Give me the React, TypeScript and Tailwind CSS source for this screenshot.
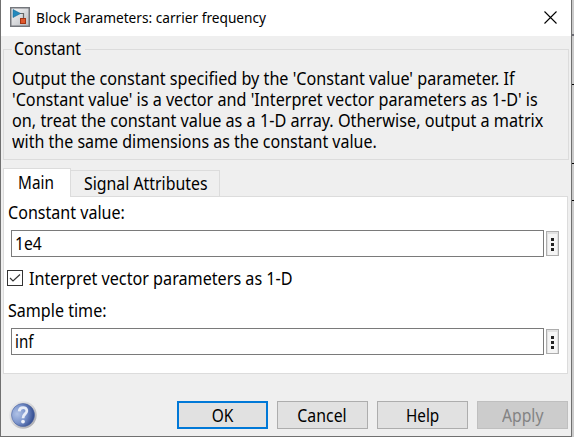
import React from "react";

const body = "font-['Noto_Sans',sans-serif] text-[18px] leading-[22px] whitespace-nowrap";

function Label({ children, className = "origin-left" }: { children: React.ReactNode; className?: string }) {
  return <span className={`block ${body} ${className}`}>{children}</span>;
}

function BlockIcon() {
  return (
    <svg width="20" height="20" viewBox="0 0 20 20" className="shrink-0">
      <defs>
        <linearGradient id="face" x1="0" y1="0" x2="1" y2="1">
          <stop offset="0" stopColor="#fafafa" />
          <stop offset="1" stopColor="#b8bbc0" />
        </linearGradient>
      </defs>
      <rect x="0.75" y="0.75" width="18.5" height="18.5" fill="url(#face)" stroke="#74777c" strokeWidth="1.5" />
      <path d="M10 6.5H13.5V11" fill="none" stroke="#666" strokeWidth="1.2" />
      <path d="M3 2.5L10.5 6.5L3 10.5Z" fill="#2389bd" stroke="#176993" strokeWidth="0.6" />
      <rect x="10.5" y="11.5" width="5" height="5" fill="#e0582c" stroke="#a33413" />
    </svg>
  );
}

function HelpIcon() {
  return (
    <svg width="28" height="28" viewBox="0 0 28 28" className="shrink-0">
      <defs>
        <linearGradient id="rim" x1="0" y1="0" x2="1" y2="1">
          <stop offset="0" stopColor="#f0f0f0" />
          <stop offset="0.5" stopColor="#d3d3d5" />
          <stop offset="1" stopColor="#a0a0a6" />
        </linearGradient>
        <radialGradient id="ball" cx="0.25" cy="0.45" r="0.8">
          <stop offset="0" stopColor="#b0c2e6" />
          <stop offset="0.5" stopColor="#7a93cb" />
          <stop offset="1" stopColor="#263f85" />
        </radialGradient>
      </defs>
      <circle cx="14" cy="14" r="13.7" fill="url(#rim)" />
      <circle cx="14" cy="14" r="11.5" fill="url(#ball)" stroke="#4d64a0" strokeWidth="0.6" />
      <path d="M10.2 10.4C10.4 5.4 18 5.4 17.8 10C17.6 13 14 13 14 17.2" fill="none" stroke="#e8edf8" strokeWidth="2.8" />
      <circle cx="14" cy="20.6" r="1.9" fill="#f0f3fb" />
    </svg>
  );
}

function Field({ value, scale }: { value: string; scale: string }) {
  return (
    <div className="flex h-[27px] shrink-0 items-center gap-0.5">
      <div className="flex h-[27px] w-[533px] items-center border border-[#7a7a7a] bg-white pl-[3px]">
        <Label className={`-mt-px origin-left ${scale}`}>{value}</Label>
      </div>
      <div className="flex h-[25px] w-[13px] flex-col items-center justify-center gap-0.5 border border-[#adadad] bg-[#f5f5f5] pt-0.5 shadow-[inset_0_1px_0_1px_#e1e1e1]">
        <i className="size-[3px] bg-[#222]" />
        <i className="size-[3px] bg-[#222]" />
        <i className="size-[3px] bg-[#222]" />
      </div>
    </div>
  );
}

function Button({ label, scale, className = "border border-[#adadad] bg-[#e1e1e1]" }: { label: string; scale: string; className?: string }) {
  return (
    <div className={`flex h-7 w-[91px] items-center justify-center ${className}`}>
      <Label className={`origin-center ${scale}`}>{label}</Label>
    </div>
  );
}

export default function App() {
  return (
    <div className="flex h-[437px] w-[574px] overflow-hidden bg-[#cbcbcb] text-black">
      <div className="flex h-[437px] w-[572px] shrink-0 flex-col border-r border-b border-l border-[#707070] bg-[#efefef]">
        <div className="flex h-9 shrink-0 items-center bg-white pl-[9px] pr-[14px]">
          <div className="-mt-0.5"><BlockIcon /></div>
          <span className="mb-0.5 ml-1.5 origin-left scale-x-[.912] whitespace-nowrap font-['Noto_Sans',sans-serif] text-[15px]">
            Block Parameters: carrier frequency
          </span>
          <svg width="13" height="13" viewBox="0 0 13 13" className="mb-0.5 ml-auto">
            <path d="M0.5 0.5L12.5 12.5M12.5 0.5L0.5 12.5" stroke="black" strokeWidth="1.1" />
          </svg>
        </div>
        <fieldset className="ml-0.5 mt-0.5 h-[122px] w-[566px] min-w-0 shrink-0 border border-[#dcdcdc] pl-2">
          <legend className="h-[22px] w-[73px] pl-0.5">
            <Label className="-mt-px origin-left scale-x-[.88]">Constant</Label>
          </legend>
          <div className="mt-2 flex w-max flex-col [&>span]:h-[21px] [&>span]:leading-[21px]">
            <Label className="origin-left scale-x-[.898]">Output the constant specified by the 'Constant value' parameter. If</Label>
            <Label className="origin-left scale-x-[.898]">'Constant value' is a vector and 'Interpret vector parameters as 1-D' is</Label>
            <Label className="origin-left scale-x-[.901]">on, treat the constant value as a 1-D array. Otherwise, output a matrix</Label>
            <Label className="origin-left scale-x-[.889]">with the same dimensions as the constant value.</Label>
          </div>
        </fieldset>
        <div className="ml-0.5 mt-2 flex h-7 w-[565px] shrink-0">
          <div className="z-10 flex h-[29px] w-[68px] items-center border-x border-t border-[#dcdcdc] bg-white pl-3.5">
            <Label className="-mt-0.5 origin-left scale-x-[.85]">Main</Label>
          </div>
          <div className="mt-0.5 flex h-[26px] w-[149px] items-center border-r border-t border-[#dcdcdc] pl-[13px]">
            <Label className="-mt-px origin-left scale-x-[.881]">Signal Attributes</Label>
          </div>
        </div>
        <div className="ml-0.5 flex h-[178px] w-[565px] shrink-0 flex-col border border-[#dcdcdc] bg-white pl-[7px]">
          <div className="-ml-[3px] h-[33px] shrink-0 pt-1">
            <Label className="origin-left scale-x-[.893]">Constant value:</Label>
          </div>
          <Field value="1e4" scale="scale-x-[.87]" />
          <div className="-ml-1 flex h-[41px] shrink-0 items-center">
            <svg width="16" height="16" viewBox="0 0 16 16">
              <rect x="0.5" y="0.5" width="15" height="15" fill="white" stroke="#333" />
              <path d="M3 8L6 11L13 4.5" fill="none" stroke="#333" strokeWidth="1.2" />
            </svg>
            <Label className="ml-1.5 origin-left scale-x-[.898]">Interpret vector parameters as 1-D</Label>
          </div>
          <div className="-ml-[3px] h-[30px] shrink-0 pt-px">
            <Label className="origin-left scale-x-[.893]">Sample time:</Label>
          </div>
          <Field value="inf" scale="scale-x-[.84]" />
        </div>
        <div className="mt-[27px] flex h-7 w-[567px] items-center gap-[9px] pl-2">
          <div className="mr-auto"><HelpIcon /></div>
          <Button label="OK" scale="scale-x-[.86]" className="border-2 border-[#0078d7] bg-[#e1e1e1]" />
          <Button label="Cancel" scale="scale-x-[.88]" />
          <Button label="Help" scale="scale-x-[.85]" />
          <Button label="Apply" scale="scale-x-[.87]" className="border border-[#bfbfbf] bg-[#cccccc] text-[#838383]" />
        </div>
      </div>
      <div className="flex w-0.5 flex-col">
        <div className="mt-[34px] h-0.5 bg-[#6d6d75]" />
        <div className="mt-12 h-px bg-black" />
        <div className="mt-[78px] h-px bg-black" />
        <div className="mt-9 h-px bg-black" />
      </div>
    </div>
  );
}
